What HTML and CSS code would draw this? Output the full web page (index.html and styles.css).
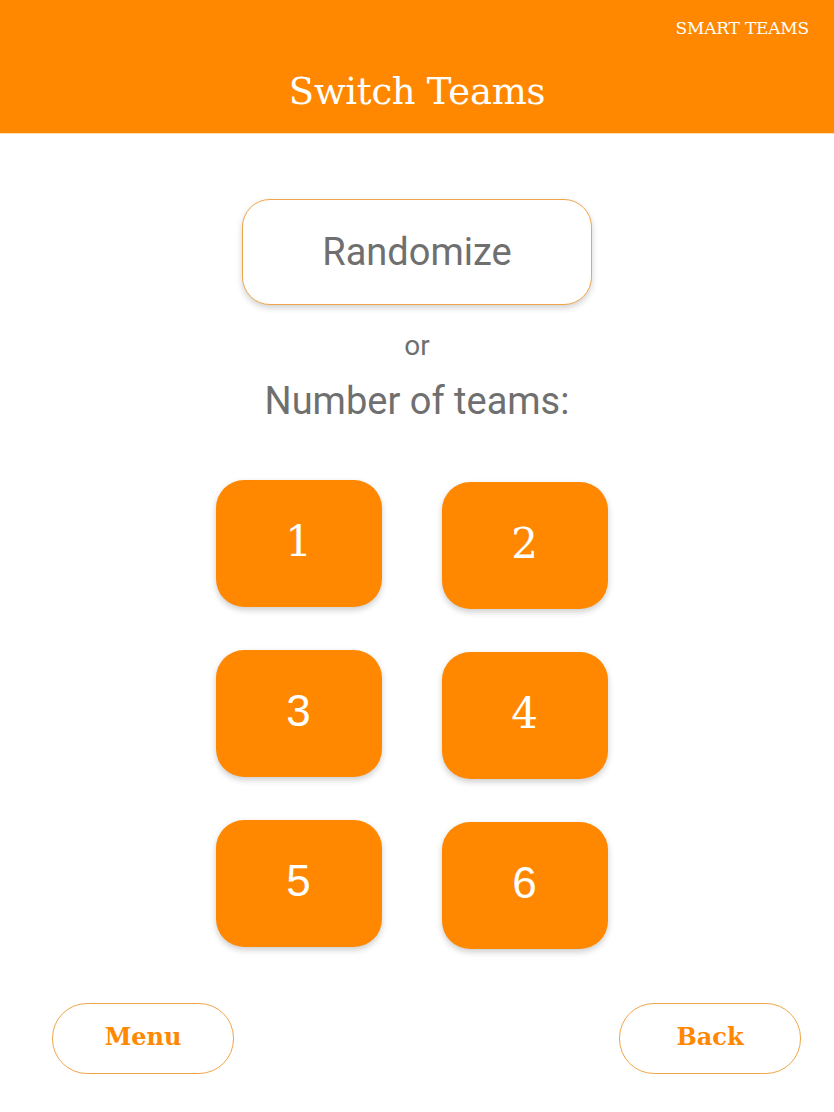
FILE: index.html
```html
<!DOCTYPE html>
<html lang="en">
<head>
  <meta charset="UTF-8" />
  <meta name="viewport" content="width=device-width, initial-scale=1.0" />
  <title>Smart Teams - Switch Teams</title>
  <link rel="stylesheet" href="styles.css">
</head>
<body>
  <header class="topbar">
    <div class="brand">SMART TEAMS</div>
    <h1>Switch Teams</h1>
  </header>

  <main class="content">
    <button class="randomize">Randomize</button>
    <div class="or">or</div>
    <div class="prompt">Number of teams:</div>

    <div class="team-grid">
      <button class="team-btn">1</button>
      <button class="team-btn shift">2</button>
      <button class="team-btn plain">3</button>
      <button class="team-btn shift">4</button>
      <button class="team-btn plain">5</button>
      <button class="team-btn plain shift">6</button>
    </div>
  </main>

  <footer class="nav">
    <button class="nav-btn">Menu</button>
    <button class="nav-btn">Back</button>
  </footer>
</body>
</html>
```

FILE: styles.css
```css
:root {
  --orange: #ff8800;
  --border: #f0a54a;
  --grey: #6f6f6f;
  --slab: 'DejaVu Serif', 'Liberation Serif', serif;
}

* {
  box-sizing: border-box;
}

body {
  margin: 0;
  font-family: Roboto, 'Noto Sans', sans-serif;
  background: #fff;
}

button {
  font: inherit;
  cursor: pointer;
}

.topbar {
  background: var(--orange);
  height: 134px;
  color: #fff;
  padding-top: 18px;
  border-bottom: 1px solid #ffe0b0;
}

.brand {
  text-align: right;
  padding-right: 25px;
  font-family: var(--slab);
  font-size: 17px;
  line-height: 20px;
  letter-spacing: -0.2px;
}

.topbar h1 {
  margin: 32px 0 0;
  text-align: center;
  font-family: var(--slab);
  font-weight: normal;
  font-size: 37px;
  line-height: 44px;
  letter-spacing: -0.3px;
}

.content {
  display: flex;
  flex-direction: column;
  align-items: center;
}

.randomize {
  margin-top: 65px;
  width: 350px;
  height: 106px;
  background: #fff;
  border: 1.5px solid var(--border);
  border-radius: 28px;
  box-shadow: 0 3px 6px rgba(0, 0, 0, 0.18);
  font-size: 38px;
  color: var(--grey);
  padding-bottom: 2px;
}

.or {
  margin-top: 21px;
  font-size: 28px;
  line-height: 40px;
  color: var(--grey);
}

.prompt {
  margin-top: 13px;
  font-size: 38px;
  line-height: 44px;
  color: var(--grey);
}

.team-grid {
  margin-top: 57px;
  margin-right: 11px;
  display: grid;
  grid-template-columns: repeat(2, 166px);
  grid-auto-rows: 127px;
  column-gap: 60px;
  row-gap: 43px;
}

.team-btn {
  border: none;
  border-radius: 28px;
  background: var(--orange);
  color: #fff;
  font-family: var(--slab);
  font-size: 42px;
  padding-bottom: 6px;
  box-shadow: 0 3px 6px rgba(0, 0, 0, 0.2);
}

.team-btn.plain {
  font-family: 'Liberation Sans', Arial, sans-serif;
  font-size: 44px;
}

.team-btn.shift {
  transform: translateY(2px);
}

.nav {
  display: flex;
  justify-content: space-between;
  margin-top: 56px;
  padding: 0 33px 0 52px;
}

.nav-btn {
  width: 182px;
  height: 71px;
  background: #fff;
  border: 1.5px solid var(--border);
  border-radius: 35px;
  color: var(--orange);
  font-family: var(--slab);
  font-weight: bold;
  font-size: 24px;
  padding-bottom: 5px;
}
```
